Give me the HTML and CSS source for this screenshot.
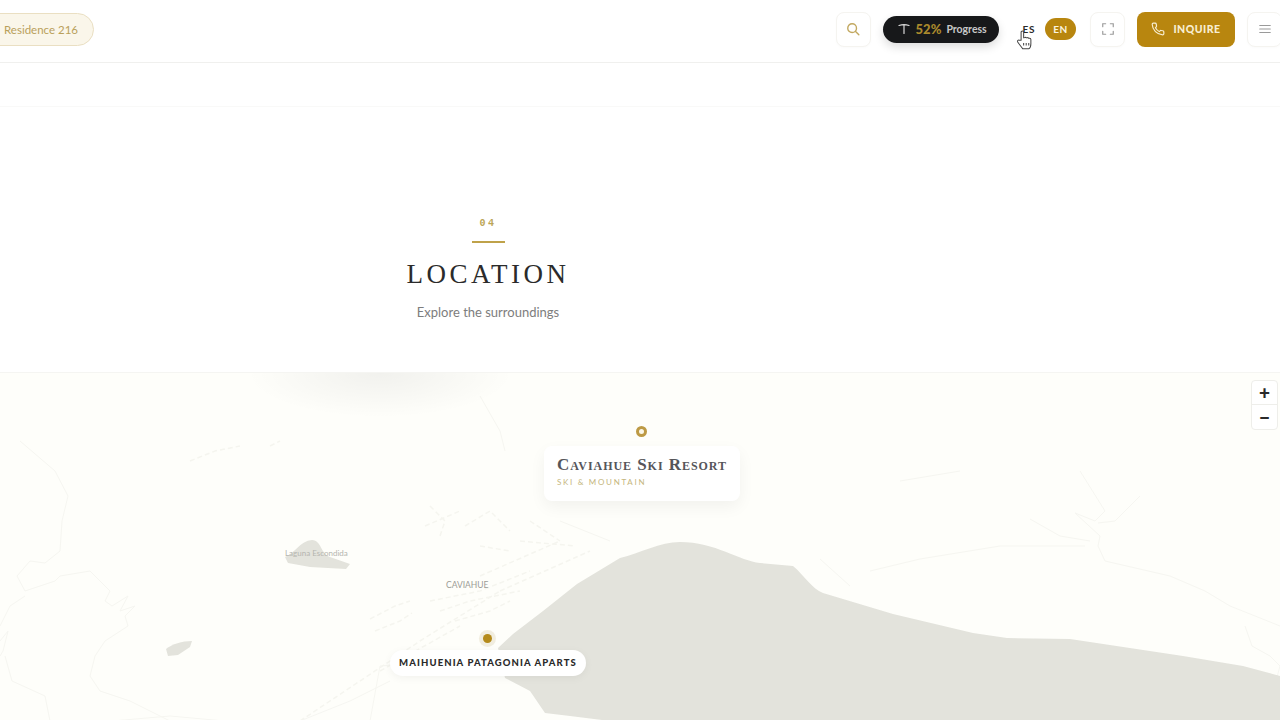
FILE: index.html
```html
<!DOCTYPE html>
<html lang="en">
<head>
  <meta charset="UTF-8" />
  <title>Residence 216 - Location</title>
  <link rel="stylesheet" href="styles.css">
</head>
<body>
  <header class="topbar">
    <div class="residencia">Residence 216</div>
    <div class="acciones">
      <button class="btn-icono btn-buscar" aria-label="Search">
        <svg width="14" height="14" viewBox="0 0 24 24" fill="none" stroke="currentColor" stroke-width="2.4" stroke-linecap="round"><circle cx="10.5" cy="10.5" r="7.5"/><path d="M16 16l6 6"/></svg>
      </button>
      <div class="progreso">
        <svg width="12" height="12" viewBox="0 0 24 24" fill="none" stroke="currentColor" stroke-width="2.4" stroke-linecap="round"><path d="M2 5c6-2 14-2 20 0M12 4v17"/></svg>
        <span class="progreso-num">52%</span>
        <span class="progreso-txt">Progress</span>
      </div>
      <div class="idiomas">
        <span class="idioma">ES</span>
        <span class="idioma idioma-activo">EN</span>
      </div>
      <button class="btn-icono btn-pantalla" aria-label="Fullscreen">
        <svg width="14" height="14" viewBox="0 0 24 24" fill="none" stroke="currentColor" stroke-width="2" stroke-linecap="round"><path d="M3 8V3h5M16 3h5v5M21 16v5h-5M8 21H3v-5"/></svg>
      </button>
      <button class="btn-inquire">
        <svg width="14" height="14" viewBox="0 0 24 24" fill="none" stroke="currentColor" stroke-width="2" stroke-linecap="round" stroke-linejoin="round"><path d="M22 17v3a2 2 0 0 1-2 2A19 19 0 0 1 2 4a2 2 0 0 1 2-2h3a2 2 0 0 1 2 1.7l.5 3a2 2 0 0 1-.6 1.8L7.600 9.800a16 16 0 0 0 6.600 6.600l1.300-1.300a2 2 0 0 1 1.800-.6l3 .5A2 2 0 0 1 22 17z"/></svg>
        INQUIRE
      </button>
      <button class="btn-icono btn-menu" aria-label="Menu">
        <svg width="14" height="14" viewBox="0 0 24 24" fill="none" stroke="currentColor" stroke-width="2" stroke-linecap="round"><path d="M3 6h18M3 12h18M3 18h18"/></svg>
      </button>
    </div>
    <svg class="cursor" width="17" height="21" viewBox="0 0 20 24" fill="#fff" stroke="#444" stroke-width="1.200" stroke-linejoin="round"><path d="M6 13V3.500a1.500 1.500 0 0 1 3 0V10l1.500-.4a1.300 1.300 0 0 1 1.500.4l1.400-.2a1.300 1.300 0 0 1 1.400.6l1.200 0a1.500 1.500 0 0 1 1.500 1.500V17c0 3-1.500 5.500-2.500 6H8c-1-1.500-5-6.500-6-8-.8-1.500.8-3 2-2z"/><path d="M9 16v3M12 16v3M15 16v3" fill="none"/></svg>
  </header>

  <div class="franja"></div>

  <section class="titulo">
    <span class="titulo-num">04</span>
    <span class="titulo-linea"></span>
    <h2>LOCATION</h2>
    <p>Explore the surroundings</p>
  </section>

  <!-- MAPA -->
  <section class="mapa">
    <svg class="mapa-fondo" width="1280" height="348" viewBox="0 372 1280 348">
      <g class="rios">
        <path d="M20 440L55 470L68 495L62 520L60 550L45 562L30 560L17 575L25 590L55 580L60 575L90 570L110 590L105 600L112 605L128 595L120 610L135 605L125 615L128 625L105 640L95 655L90 675L100 690L130 700L170 720"/>
        <path d="M0 625L10 605L25 595M0 640L8 630L3 650L0 655M5 655L12 680L45 695L50 720"/>
        <path d="M112 720L170 715L225 720M370 720L380 665L440 660M300 720L350 700L390 680"/>
        <path d="M1080 470L1105 510L1095 520L1075 512L1100 535L1098 545L1105 560M1105 560L1170 575L1205 590L1230 605L1280 625"/>
        <path d="M1245 625L1252 645L1270 655L1280 665L1276 680M1140 495L1115 520L1098 522M1030 518L1060 535L1090 540M870 570L920 558L1000 545L1085 545"/>
        <path d="M820 558L850 585M900 480L960 470M480 395L500 430L505 450M560 520L610 540"/>
      </g>
      <g class="calles">
        <path d="M370 618L395 605L410 600M375 630L400 620L412 612M430 505L445 520L440 535M425 525L460 510M465 525L490 510L510 530M530 520L560 540M480 545L510 550M520 540L575 545"/>
        <path d="M440 610L470 600L520 590M455 620L490 610L510 600M480 575L560 540M500 590L590 550M430 600L480 590L530 570"/>
        <path d="M190 460L215 450L240 445M270 445L280 440M380 670L460 625M300 720L420 640L500 590"/>
      </g>
      <path class="agua" d="M498 647L513 633L543 610L577 583L620 557C640 552 660 541 680 541C715 541 740 560 760 562L793 565C805 575 812 588 823 592L893 613L973 632L1007 637L1070 638L1183 655L1243 665L1280 675V720H610L570 715L545 712L530 690L505 677Z"/>
      <path class="agua" d="M285 556C295 552 300 540 312 539C322 540 320 552 330 556L350 563L346 568L310 566L288 562Z"/>
      <path class="agua" d="M166 648C172 643 182 640 192 640L190 646L178 654L168 655Z"/>
      <text class="mapa-lago" x="285" y="555">Laguna Escondida</text>
      <text class="mapa-pueblo" x="446" y="587">CAVIAHUE</text>
    </svg>
    <div class="mapa-sombra"></div>

    <span class="pin-anillo"></span>
    <div class="tarjeta">
      <div class="tarjeta-nombre">Caviahue Ski Resort</div>
      <div class="tarjeta-tipo">SKI &amp; MOUNTAIN</div>
    </div>

    <span class="pin-punto"></span>
    <div class="etiqueta">MAIHUENIA PATAGONIA APARTS</div>

    <div class="zoom">
      <button class="zoom-btn">+</button>
      <button class="zoom-btn">−</button>
    </div>
  </section>
</body>
</html>
```

FILE: styles.css
```css
html, body {
  margin: 0;
  padding: 0;
  height: 720px;
  overflow: hidden;
}
body {
  font-family: Lato, "Noto Sans", sans-serif;
  background-color: #fff;
  color: #2a2a2a;
}
button {
  font-family: inherit;
  cursor: pointer;
}

/* barra superior */
.topbar {
  position: relative;
  height: 62px;
  border-bottom: 1px solid #f0f0ee;
  display: flex;
  align-items: center;
  justify-content: space-between;
}
.residencia {
  margin-left: -18px;
  padding: 0 15px 0 21px;
  height: 31px;
  margin-top: -4px;
  line-height: 31px;
  font-size: 11.5px;
  color: #b9a05a;
  background-color: #faf6ea;
  border: 1px solid #eadfc2;
  border-radius: 17px;
}
.acciones {
  display: flex;
  align-items: center;
  margin-right: -2px;
  margin-top: -4px;
}
.btn-icono {
  width: 35px;
  height: 35px;
  padding: 0;
  display: flex;
  align-items: center;
  justify-content: center;
  background: #fff;
  border: 1px solid #f5f4f0;
  border-radius: 8px;
  box-shadow: 0 1px 3px rgba(0,0,0,0.02);
  color: #9a9a9a;
}
.btn-buscar { color: #c2a860; }
.progreso {
  margin-left: 12px;
  width: 116px;
  height: 27px;
  box-sizing: border-box;
  padding-left: 15px;
  display: flex;
  align-items: center;
  gap: 5px;
  background-color: #17181a;
  border-radius: 14px;
  box-shadow: 0 4px 10px rgba(0,0,0,0.14);
  color: #d8d8d8;
}
.progreso-num {
  margin-left: 1px;
  font-size: 13px;
  font-weight: 900;
  color: #ab8a2c;
}
.progreso-txt {
  font-size: 10.5px;
  font-weight: 700;
  color: #c9c9c9;
}
.idiomas {
  margin-left: 24px;
  display: flex;
  align-items: center;
  gap: 10px;
}
.idioma {
  font-size: 10px;
  font-weight: 700;
  letter-spacing: 0.6px;
  color: #2a2a2a;
}
.idioma-activo {
  width: 31px;
  height: 22px;
  line-height: 22px;
  text-align: center;
  background-color: #b8860f;
  border-radius: 11px;
  color: #fbf4e0;
}
.btn-pantalla {
  margin-left: 14px;
}
.btn-inquire {
  margin-left: 12px;
  width: 98px;
  height: 35px;
  padding: 0;
  display: flex;
  align-items: center;
  justify-content: center;
  gap: 8px;
  background-color: #b8860f;
  border: none;
  border-radius: 8px;
  font-size: 10.5px;
  font-weight: 900;
  letter-spacing: 0.5px;
  color: #f8eed2;
}
.btn-menu {
  margin-left: 12px;
}
.cursor {
  position: absolute;
  left: 1016px;
  top: 29px;
}

.franja {
  height: 43px;
  border-bottom: 1px solid #f9f9f8;
}

/* titulo de la seccion */
.titulo {
  width: 976px;
  height: 265px;
  box-sizing: border-box;
  padding-top: 110px;
  display: flex;
  flex-direction: column;
  align-items: center;
}
.titulo-num {
  font-family: "Liberation Mono", monospace;
  font-size: 10px;
  font-weight: 700;
  line-height: 12px;
  letter-spacing: 2.5px;
  color: #bba556;
  margin-top: 1px;
}
.titulo-linea {
  width: 33px;
  height: 2px;
  margin-top: 11px;
  background-color: #bfa24a;
}
.titulo h2 {
  margin: 14px 0 0;
  font-family: "Liberation Serif", serif;
  font-size: 27px;
  font-weight: 400;
  line-height: 34px;
  letter-spacing: 3.5px;
  color: #2b2b2b;
}
.titulo p {
  margin: 12px 0 0;
  font-size: 13px;
  line-height: 18px;
  color: #7d7d7d;
}

/* mapa */
.mapa {
  position: relative;
  height: 348px;
  overflow: hidden;
  background-color: #fefefa;
  border-top: 1px solid #f5f5f2;
}
.mapa-fondo {
  display: block;
}
.rios path {
  fill: none;
  stroke: #f6f6f1;
  stroke-width: 1;
}
.calles path {
  fill: none;
  stroke: #f5f5ef;
  stroke-width: 1.500;
  stroke-dasharray: 5 3;
}
.agua {
  fill: #e3e3dc;
}
.mapa-lago {
  font-size: 8px;
  fill: #b5b5af;
}
.mapa-pueblo {
  font-size: 8.500px;
  fill: #9c9c96;
}
.mapa-sombra {
  position: absolute;
  left: 245px;
  top: -45px;
  width: 270px;
  height: 90px;
  background: radial-gradient(ellipse at center, rgba(0,0,0,0.05), rgba(0,0,0,0) 70%);
}
.pin-anillo {
  position: absolute;
  left: 636px;
  top: 53px;
  width: 11px;
  height: 11px;
  box-sizing: border-box;
  background-color: #fbf7e8;
  border: 3px solid #bd9a45;
  border-radius: 50%;
}
.tarjeta {
  position: absolute;
  left: 544px;
  top: 73px;
  width: 196px;
  height: 55px;
  box-sizing: border-box;
  padding: 9px 13px;
  background-color: #fff;
  border-radius: 8px;
  box-shadow: 0 6px 16px rgba(0,0,0,0.05);
}
.tarjeta-nombre {
  font-family: "Liberation Serif", serif;
  font-size: 17px;
  font-variant: small-caps;
  font-weight: 700;
  line-height: 19px;
  letter-spacing: 0.950px;
  white-space: nowrap;
  color: #55555a;
}
.tarjeta-tipo {
  margin-top: 3px;
  font-size: 8px;
  line-height: 11px;
  letter-spacing: 1.700px;
  color: #c5b67e;
}
.pin-punto {
  position: absolute;
  left: 483px;
  top: 261px;
  width: 9px;
  height: 9px;
  background-color: #b48a1a;
  border-radius: 50%;
  box-shadow: 0 0 0 4px rgba(240,235,220,0.9);
}
.etiqueta {
  position: absolute;
  left: 390px;
  top: 277px;
  width: 196px;
  height: 26px;
  line-height: 26px;
  text-align: center;
  background-color: #fff;
  border-radius: 13px;
  box-shadow: 0 2px 8px rgba(0,0,0,0.05);
  font-size: 9.500px;
  font-weight: 900;
  letter-spacing: 1.100px;
  color: #2a2a2a;
}
.zoom {
  position: absolute;
  left: 1251px;
  top: 7px;
  width: 25px;
  display: flex;
  flex-direction: column;
  background-color: #fff;
  border: 1px solid #eeeeea;
  border-radius: 4px;
}
.zoom-btn {
  height: 24px;
  padding: 0;
  background: none;
  border: none;
  border-bottom: 1px solid #eeeeea;
  font-size: 19px;
  font-weight: 900;
  line-height: 22px;
  color: #2a2a2a;
}
.zoom-btn:last-child {
  border-bottom: none;
}
```
